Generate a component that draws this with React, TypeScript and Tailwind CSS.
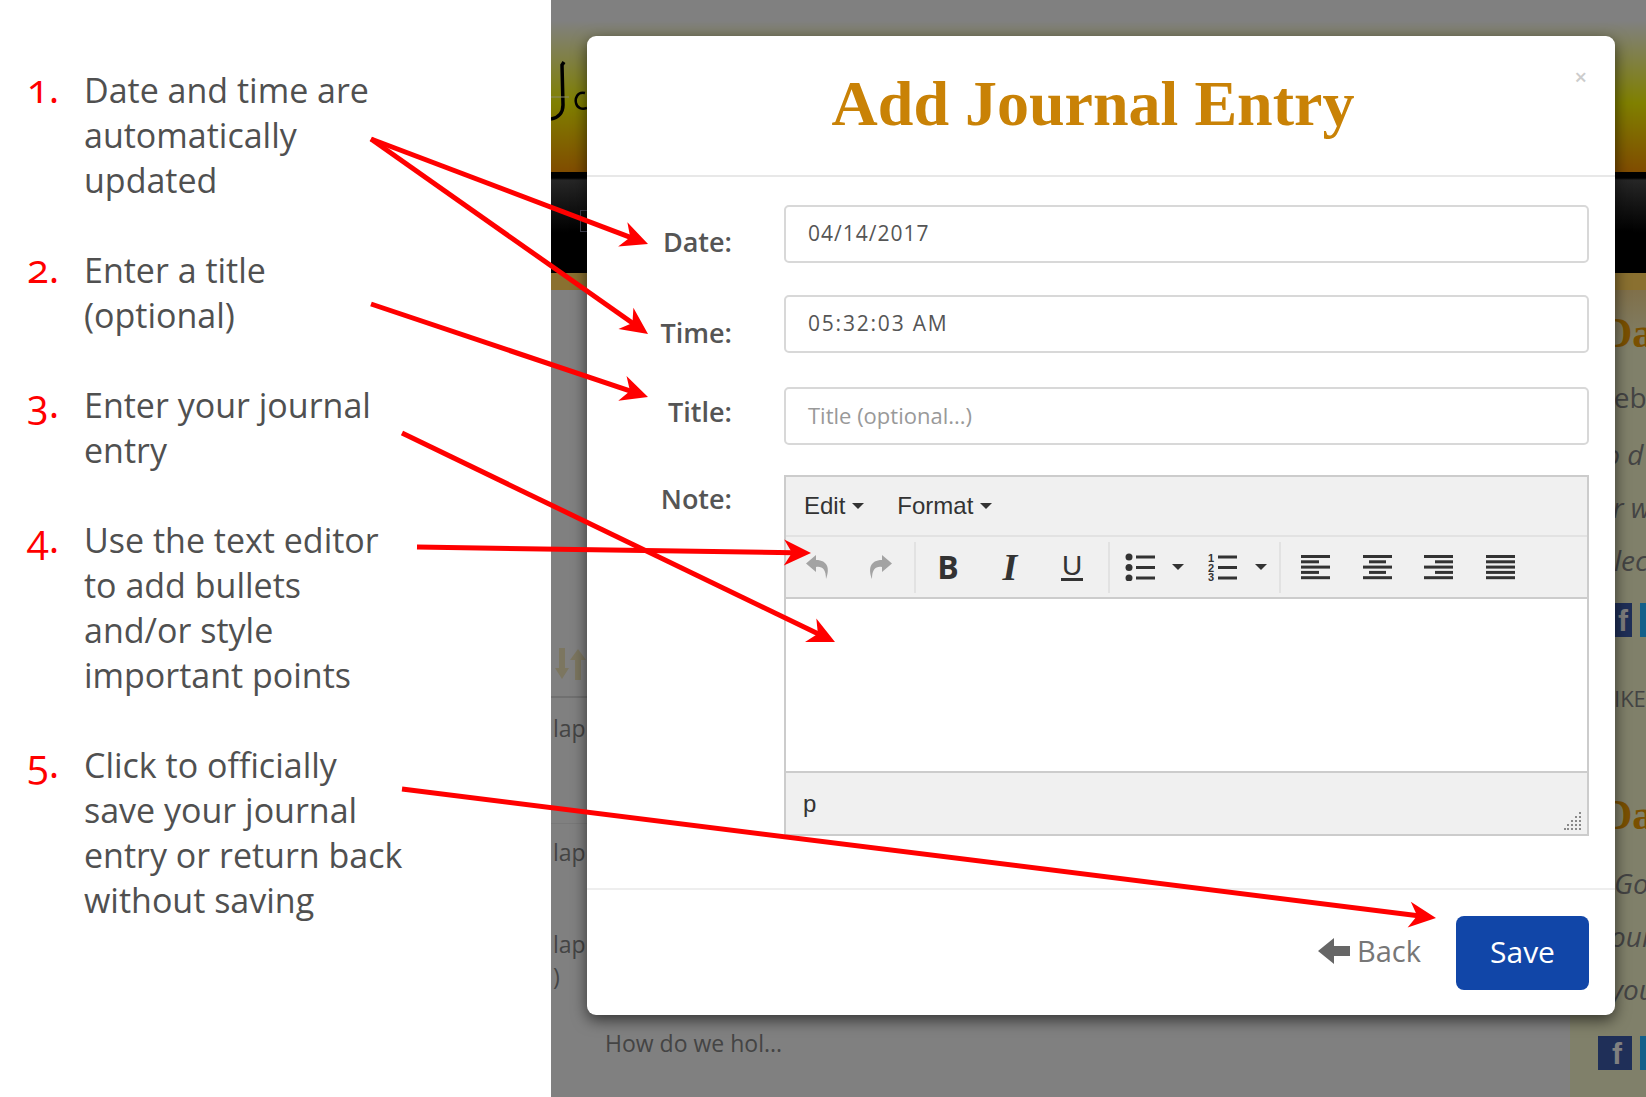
import type { ReactNode } from 'react';

const steps = [
  { n: '1.', lines: ['Date and time are', 'automatically', 'updated'] },
  { n: '2.', lines: ['Enter a title', '(optional)'] },
  { n: '3.', lines: ['Enter your journal', 'entry'] },
  { n: '4.', lines: ['Use the text editor', 'to add bullets', 'and/or style', 'important points'] },
  { n: '5.', lines: ['Click to officially', 'save your journal', 'entry or return back', 'without saving'] },
];

const arrows = [
  [371, 139, 648, 244],
  [371, 139, 648, 334],
  [371, 304, 648, 397],
  [402, 433, 835, 642],
  [417, 547, 811, 553],
  [402, 789, 1436, 918],
];

function Arrow({ from }: { from: number[] }) {
  const [x1, y1, x2, y2] = from;
  const len = Math.hypot(x2 - x1, y2 - y1);
  const ux = (x2 - x1) / len;
  const uy = (y2 - y1) / len;
  const at = (back: number, side: number) =>
    `${x2 - ux * back - uy * side},${y2 - uy * back + ux * side}`;
  return (
    <g>
      <line x1={x1} y1={y1} x2={x2 - ux * 16} y2={y2 - uy * 16} stroke="#ff0000" strokeWidth="5" />
      <polygon points={`${at(0, 0)} ${at(27, 13)} ${at(19, 0)} ${at(27, -13)}`} fill="#ff0000" />
    </g>
  );
}

function ToolButton({ children, className }: { children: ReactNode; className: string }) {
  return <div className={`flex h-full items-center justify-center ${className}`}>{children}</div>;
}

function Caret() {
  return <div className="h-0 w-0 border-x-[6px] border-t-[6px] border-x-transparent border-t-[#333]" />;
}

function Separator() {
  return <div className="mx-[3px] h-[51px] w-[2px] bg-[#e2e2e2]" />;
}

function HistoryIcon({ flip }: { flip?: boolean }) {
  return (
    <svg width="24" height="26" viewBox="0 0 24 26" className={flip ? '-scale-x-100' : ''}>
      <path d="M10 1 L0 9.5 L10 18 V13 C16 12 20 15 20 25 C24 15 22 6 10 6 Z" fill="#a3a3a3" />
    </svg>
  );
}

function BulletIcon() {
  return (
    <svg width="30" height="28" viewBox="0 0 30 28" fill="#333">
      <circle cx="4" cy="4" r="3.5" />
      <circle cx="4" cy="14.5" r="3.5" />
      <circle cx="4" cy="25" r="3.5" />
      <rect x="11" y="2.5" width="19" height="3" />
      <rect x="11" y="13" width="19" height="3" />
      <rect x="11" y="23.5" width="19" height="3" />
    </svg>
  );
}

function NumberIcon() {
  return (
    <svg width="30" height="28" viewBox="0 0 30 28" fill="#333">
      <text x="0" y="8.5" fontSize="11" fontWeight="700" fontFamily="Liberation Sans, sans-serif">1</text>
      <text x="0" y="18.5" fontSize="11" fontWeight="700" fontFamily="Liberation Sans, sans-serif">2</text>
      <text x="0" y="28" fontSize="11" fontWeight="700" fontFamily="Liberation Sans, sans-serif">3</text>
      <rect x="10" y="2.5" width="19" height="3" />
      <rect x="10" y="13" width="19" height="3" />
      <rect x="10" y="23.5" width="19" height="3" />
    </svg>
  );
}

function AlignIcon({ bars }: { bars: [number, number][] }) {
  return (
    <svg width="30" height="28" viewBox="0 0 30 28" fill="#333">
      {bars.map(([x, w], i) => (
        <rect key={i} x={x} y={2 + i * 5.3} width={w} height="3" />
      ))}
    </svg>
  );
}

function ResizeDots() {
  const dots = [
    [15, 0], [15, 4], [11, 4], [15, 8], [11, 8], [7, 8],
    [15, 12], [11, 12], [7, 12], [3, 12], [15, 16], [11, 16], [7, 16], [3, 16], [0, 16],
  ];
  return (
    <svg width="18" height="18" viewBox="0 0 18 18" className="absolute right-[5px] bottom-[4px]" fill="#8a8a8a">
      {dots.map(([x, y], i) => (
        <rect key={i} x={x} y={y} width="2" height="2" />
      ))}
    </svg>
  );
}

function LogoFragment() {
  return (
    <svg width="36" height="60" viewBox="0 0 36 60" fill="none" stroke="#000">
      <path d="M13 1 L11 4 L12 44 C12 52 7 57 0 58" strokeWidth="3.5" />
      <path d="M34 32 C26 30 24 38 25 42 C26 47 31 49 36 47" strokeWidth="2.5" />
      <line x1="0" y1="36" x2="18" y2="36" stroke="#8a8a6a" strokeWidth="1" />
    </svg>
  );
}

function SortIcon() {
  return (
    <svg width="32" height="32" viewBox="0 0 32 32" fill="#7c7660">
      <path d="M4 0 H10 V20 H14 L7 31 L0 20 H4 Z" />
      <path d="M20 32 H26 V12 H31 L23 1 L15 12 H20 Z" />
    </svg>
  );
}

function BackdropPage() {
  return (
    <div className="flex h-full w-full flex-col overflow-hidden bg-[#808080]">
      <div className="h-[172px] shrink-0 bg-[linear-gradient(#808080_12%,#808000_60%,#804c00_100%)] pt-[61px]">
        <LogoFragment />
      </div>
      <div className="h-[101px] shrink-0 bg-[linear-gradient(#000_0%,#000_6%,#262626_8%,#000_60%)] pt-[38px] pl-[29px]">
        <div className="h-[22px] w-[10px] border border-[#445]" />
      </div>
      <div className="h-[17px] shrink-0 bg-[#8a7030]" />
      <div className="flex min-h-0 flex-1 font-['Open_Sans',sans-serif]">
        <div className="min-w-0 flex-1 pt-[358px] text-[23px] text-[#444]">
          <div className="h-[50px] border-b-[2px] border-[#707070] pl-[4px]">
            <SortIcon />
          </div>
          <div className="h-[126px] border-b border-[#787878] pt-[14px] pl-[2px] leading-[32px]">lap</div>
          <div className="h-[104px] pt-[12px] pl-[2px] leading-[32px]">lap</div>
          <div className="pl-[2px] leading-[32px]">lap</div>
          <div className="pl-[2px] leading-[32px]">)</div>
          <div className="pt-[35px] pl-[54px] leading-[32px]">How do we hol...</div>
        </div>
        <div className="w-[76px] shrink-0 bg-[linear-gradient(#80704a_0px,#80806a_60px)] pt-[18px] pl-[18px] text-[28px] leading-[53px] whitespace-nowrap text-[#444] italic">
          <div className="ml-[14px] font-['Liberation_Serif',serif] text-[42px] leading-[50px] font-bold text-[#7a5000] not-italic">Da</div>
          <div className="mt-[13px] h-[57px] not-italic">Web</div>
          <div>do d</div>
          <div>for w</div>
          <div className="ml-[26px]">lec</div>
          <div className="mt-[16px] ml-[10px] flex gap-[8px]">
            <div className="h-[34px] w-[34px] shrink-0 bg-[#1f2f58] pr-[4px] text-right font-['Liberation_Sans',sans-serif] text-[30px] leading-[36px] font-bold text-[#808080] not-italic">f</div>
            <div className="h-[34px] w-[34px] shrink-0 bg-[#12608a]" />
          </div>
          <div className="mt-[46px] ml-[26px] text-[22px] leading-[30px] not-italic">IKE</div>
          <div className="mt-[77px] ml-[14px] font-['Liberation_Serif',serif] text-[42px] leading-[50px] font-bold text-[#7a5000] not-italic">Da</div>
          <div className="mt-[17px] ml-[26px]">Go</div>
          <div className="ml-[22px]">our</div>
          <div className="ml-[22px]">you</div>
          <div className="mt-[20px] ml-[10px] flex gap-[8px]">
            <div className="h-[34px] w-[34px] shrink-0 bg-[#1f2f58] pr-[10px] text-right font-['Liberation_Sans',sans-serif] text-[30px] leading-[36px] font-bold text-[#808080] not-italic">f</div>
            <div className="h-[34px] w-[34px] shrink-0 bg-[#12608a]" />
          </div>
        </div>
      </div>
    </div>
  );
}

function TextInput({ children, className }: { children: ReactNode; className: string }) {
  return (
    <div className={`flex h-[58px] flex-1 items-center rounded-[5px] border-2 border-[#d8d8d8] pl-[22px] font-['Open_Sans',sans-serif] ${className}`}>
      {children}
    </div>
  );
}

function Label({ children, className }: { children: ReactNode; className: string }) {
  return (
    <div className={`w-[145px] shrink-0 text-right font-['Open_Sans',sans-serif] text-[27px] leading-[36px] font-semibold text-[#555] ${className}`}>
      {children}
    </div>
  );
}

function Modal() {
  return (
    <div className="absolute top-[36px] left-[36px] flex h-[979px] w-[1028px] flex-col rounded-[9px] bg-white shadow-[0_5px_15px_rgba(0,0,0,0.6)]">
      <div className="relative flex h-[141px] shrink-0 items-center justify-center border-b-2 border-[#e8e8e8] pr-[16px] pb-[4px] font-['Liberation_Serif',serif] text-[64px] font-bold text-[#c98206]">
        Add Journal Entry
        <span className="absolute top-[25px] right-[28px] font-['Open_Sans',sans-serif] text-[22px] leading-[30px] font-semibold text-[#cccccc]">×</span>
      </div>

      <div className="flex flex-1 flex-col pt-[28px] pr-[26px]">
        <div className="flex gap-[52px]">
          <Label className="pt-[19px]">Date:</Label>
          <TextInput className="text-[21px] tracking-[1px] text-[#555]">04/14/2017</TextInput>
        </div>
        <div className="mt-[32px] flex gap-[52px]">
          <Label className="pt-[20px]">Time:</Label>
          <TextInput className="text-[21px] tracking-[1.8px] text-[#555]">05:32:03 AM</TextInput>
        </div>
        <div className="mt-[34px] flex gap-[52px]">
          <Label className="pt-[7px]">Title:</Label>
          <TextInput className="pb-[2px] text-[22px] text-[#999]">Title (optional...)</TextInput>
        </div>
        <div className="mt-[30px] flex gap-[52px]">
          <Label className="pt-[6px]">Note:</Label>
          <div className="flex h-[361px] flex-1 flex-col border-2 border-[#cccccc] font-['Liberation_Sans',sans-serif] text-[#333]">
            <div className="flex h-[60px] shrink-0 items-center border-b-2 border-[#e2e2e2] bg-[#f0f0f0] pl-[18px] text-[24px]">
              <span>Edit</span>
              <span className="mr-[33px] ml-[7px]"><Caret /></span>
              <span>Format</span>
              <span className="ml-[7px]"><Caret /></span>
            </div>
            <div className="flex h-[62px] shrink-0 items-center border-b-2 border-[#cccccc] bg-[#f0f0f0] pl-[1px]">
              <ToolButton className="w-[62px]"><HistoryIcon /></ToolButton>
              <ToolButton className="w-[62px]"><HistoryIcon flip /></ToolButton>
              <Separator />
              <ToolButton className="w-[62px] pr-[4px] font-['Open_Sans',sans-serif] text-[32px] font-bold">B</ToolButton>
              <ToolButton className="w-[62px] pr-[4px] font-['Liberation_Serif',serif] text-[38px] font-bold italic">I</ToolButton>
              <ToolButton className="w-[62px] pr-[4px]">
                <span className="border-b-[3px] border-[#333] px-[1px] text-[28px] leading-[25px]">U</span>
              </ToolButton>
              <Separator />
              <ToolButton className="w-[80px] justify-start gap-[17px] pl-[12px]"><BulletIcon /><Caret /></ToolButton>
              <ToolButton className="w-[83px] justify-start gap-[17px] pl-[15px]"><NumberIcon /><Caret /></ToolButton>
              <Separator />
              <ToolButton className="w-[63px]"><AlignIcon bars={[[0, 29], [0, 18], [0, 29], [0, 18], [0, 29]]} /></ToolButton>
              <ToolButton className="w-[61px]"><AlignIcon bars={[[0, 29], [6, 17], [0, 29], [6, 17], [0, 29]]} /></ToolButton>
              <ToolButton className="w-[62px]"><AlignIcon bars={[[0, 29], [11, 18], [0, 29], [11, 18], [0, 29]]} /></ToolButton>
              <ToolButton className="w-[61px]"><AlignIcon bars={[[0, 29], [0, 29], [0, 29], [0, 29], [0, 29]]} /></ToolButton>
            </div>
            <div className="flex-1 bg-white" />
            <div className="relative flex h-[63px] shrink-0 items-center border-t-2 border-[#cccccc] bg-[#f0f0f0] pl-[17px] text-[24px]">
              p
              <ResizeDots />
            </div>
          </div>
        </div>
      </div>

      <div className="flex h-[127px] shrink-0 items-start justify-end border-t-2 border-[#eeeeee] pt-[26px] pr-[26px] font-['Open_Sans',sans-serif] text-[29px]">
        <div className="mr-[35px] flex h-[74px] items-center gap-[7px] pb-[4px] text-[#777]">
          <svg width="32" height="26" viewBox="0 0 32 26" fill="#666">
            <path d="M0 13 L16 0 V8 H32 V18 H16 V26 Z" />
          </svg>
          Back
        </div>
        <div className="flex h-[74px] w-[133px] items-center justify-center rounded-[8px] bg-[#1146a8] pb-[4px] text-[30px] text-white">Save</div>
      </div>
    </div>
  );
}

export default function App() {
  return (
    <div className="relative flex h-[1097px] w-[1646px] overflow-hidden bg-white">
      <div className="w-[551px] shrink-0 pt-[68px] pl-[27px] font-['Open_Sans',sans-serif] text-[34px] leading-[45px] text-[#505050]">
        {steps.map((step) => (
          <div key={step.n} className="mb-[45px] flex">
            <div className="-mt-[3px] w-[57px] shrink-0 text-[40px] text-[#ff0000] oldstyle-nums">{step.n}</div>
            <div className="whitespace-nowrap">
              {step.lines.map((line) => (
                <div key={line}>{line}</div>
              ))}
            </div>
          </div>
        ))}
      </div>

      <div className="relative min-w-0 flex-1">
        <BackdropPage />
        <Modal />
      </div>

      <svg className="pointer-events-none absolute inset-0" width="1646" height="1097">
        {arrows.map((a) => (
          <Arrow key={a.join('-')} from={a} />
        ))}
      </svg>
    </div>
  );
}
